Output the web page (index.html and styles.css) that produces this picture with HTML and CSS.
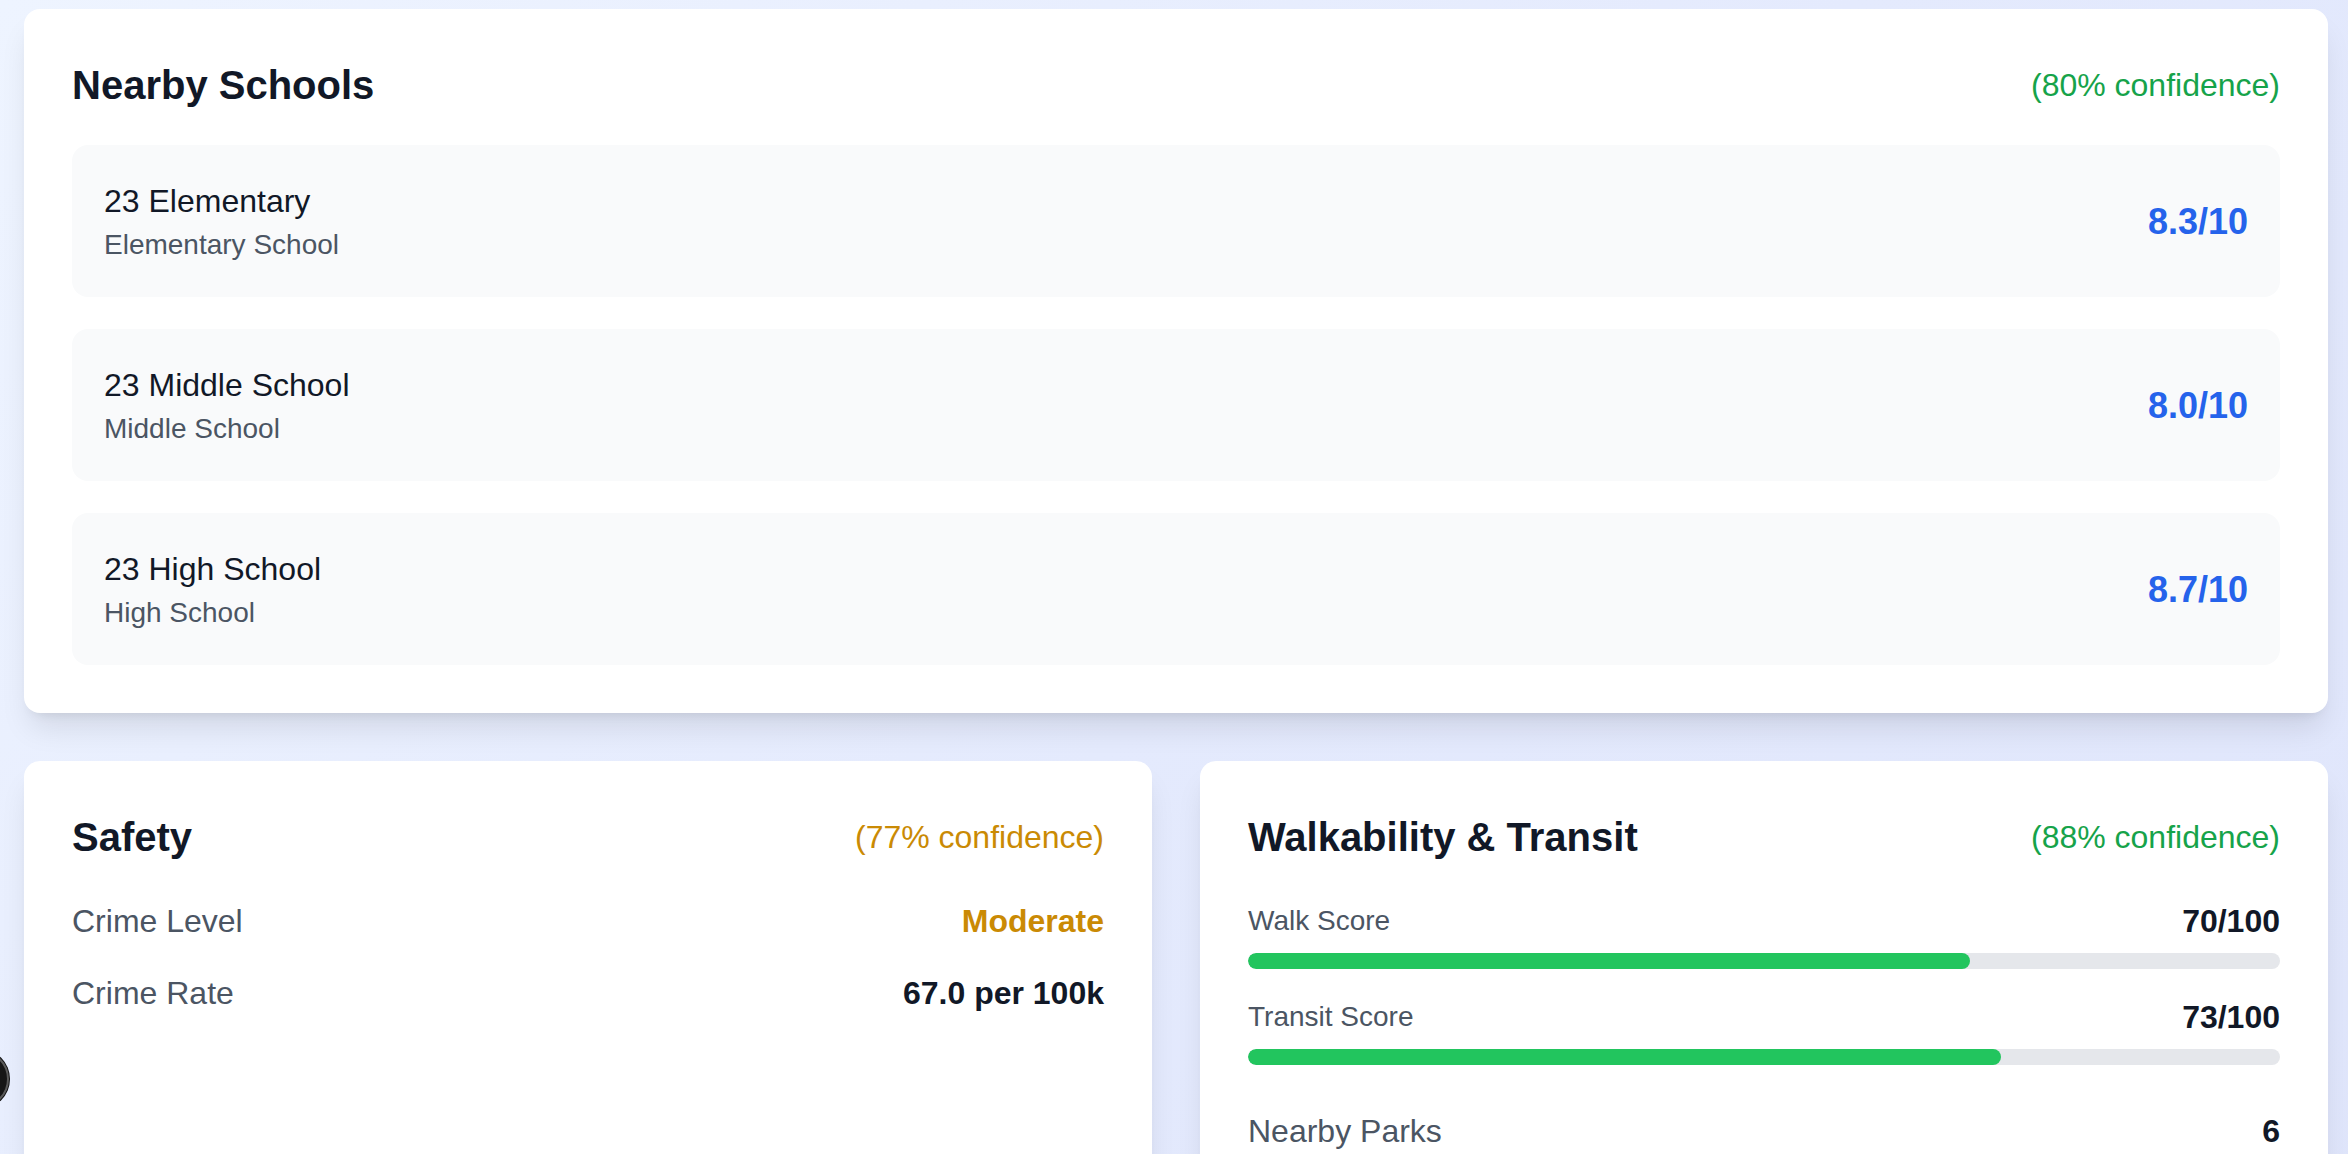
FILE: index.html
```html
<!DOCTYPE html>
<html lang="en">
<head>
<meta charset="utf-8">
<title>Neighborhood Report</title>
<link rel="stylesheet" href="styles.css">
</head>
<body>
<main class="page">
  <section class="card">
    <div class="card-head">
      <h2 class="card-title">Nearby Schools</h2>
      <span class="confidence conf-green">(80% confidence)</span>
    </div>
    <div class="school-list">
      <div class="school">
        <div class="school-info">
          <div class="school-name">23 Elementary</div>
          <div class="school-type">Elementary School</div>
        </div>
        <div class="school-score">8.3/10</div>
      </div>
      <div class="school">
        <div class="school-info">
          <div class="school-name">23 Middle School</div>
          <div class="school-type">Middle School</div>
        </div>
        <div class="school-score">8.0/10</div>
      </div>
      <div class="school">
        <div class="school-info">
          <div class="school-name">23 High School</div>
          <div class="school-type">High School</div>
        </div>
        <div class="school-score">8.7/10</div>
      </div>
    </div>
  </section>

  <div class="grid">
    <section class="card">
      <div class="card-head">
        <h2 class="card-title">Safety</h2>
        <span class="confidence conf-amber">(77% confidence)</span>
      </div>
      <div class="stat-list">
        <div class="stat">
          <span class="stat-label">Crime Level</span>
          <span class="stat-value val-amber">Moderate</span>
        </div>
        <div class="stat">
          <span class="stat-label">Crime Rate</span>
          <span class="stat-value">67.0 per 100k</span>
        </div>
      </div>
    </section>

    <section class="card">
      <div class="card-head">
        <h2 class="card-title">Walkability &amp; Transit</h2>
        <span class="confidence conf-green">(88% confidence)</span>
      </div>
      <div class="score-list">
        <div class="score">
          <div class="score-row">
            <span class="score-label">Walk Score</span>
            <span class="stat-value">70/100</span>
          </div>
          <div class="bar"><div class="bar-fill" style="width:70%"></div></div>
        </div>
        <div class="score">
          <div class="score-row">
            <span class="score-label">Transit Score</span>
            <span class="stat-value">73/100</span>
          </div>
          <div class="bar"><div class="bar-fill" style="width:73%"></div></div>
        </div>
      </div>
      <div class="stat-list extra">
        <div class="stat">
          <span class="stat-label">Nearby Parks</span>
          <span class="stat-value">6</span>
        </div>
      </div>
    </section>
  </div>
</main>
<div class="dev-badge"></div>
</body>
</html>
```

FILE: styles.css
```css
* { box-sizing: border-box; }

html, body {
  margin: 0;
  padding: 0;
}

body {
  font-family: "Liberation Sans", Arial, Helvetica, sans-serif;
  color: #111827;
  background: linear-gradient(135deg, #eef4ff 0%, #e4eafd 50%, #dfe5fb 100%);
  min-height: 1154px;
  overflow: hidden;
}

.page {
  padding: 9px 20px 0 24px;
  display: flex;
  flex-direction: column;
  gap: 48px;
}

.card {
  background: #ffffff;
  border-radius: 16px;
  padding: 48px;
  box-shadow: 0 20px 30px -6px rgba(0, 0, 0, 0.1), 0 8px 12px -8px rgba(0, 0, 0, 0.1);
}

.card-head {
  display: flex;
  justify-content: space-between;
  align-items: center;
  margin-bottom: 32px;
}

.card-title {
  margin: 0;
  font-size: 40px;
  line-height: 56px;
  font-weight: 700;
  color: #111827;
}

.confidence {
  font-size: 32px;
  line-height: 48px;
}

.conf-green { color: #16a34a; }
.conf-amber { color: #ca8a04; }

.school-list {
  display: flex;
  flex-direction: column;
  gap: 32px;
}

.school {
  background: #f9fafb;
  border-radius: 16px;
  padding: 32px;
  display: flex;
  justify-content: space-between;
  align-items: center;
}

.school-name {
  font-size: 32px;
  line-height: 48px;
  color: #111827;
}

.school-type {
  font-size: 28px;
  line-height: 40px;
  color: #4b5563;
}

.school-score {
  font-size: 36px;
  line-height: 56px;
  font-weight: 700;
  color: #2563eb;
  padding-top: 2px;
}

.grid {
  display: grid;
  grid-template-columns: 1fr 1fr;
  gap: 48px;
  min-height: 600px;
}

.stat-list {
  display: flex;
  flex-direction: column;
  gap: 24px;
}

.stat-list.extra {
  margin-top: 42px;
}

.stat {
  display: flex;
  justify-content: space-between;
  align-items: center;
}

.stat-label {
  font-size: 32px;
  line-height: 48px;
  color: #4b5563;
}

.stat-value {
  font-size: 32px;
  line-height: 48px;
  font-weight: 700;
  color: #111827;
}

.val-amber { color: #ca8a04; }

.score-list {
  display: flex;
  flex-direction: column;
  gap: 24px;
}

.score-row {
  display: flex;
  justify-content: space-between;
  align-items: center;
  margin-bottom: 8px;
}

.score-label {
  font-size: 28px;
  line-height: 40px;
  color: #4b5563;
}

.bar {
  height: 16px;
  background: #e5e7eb;
  border-radius: 9999px;
  overflow: hidden;
}

.bar-fill {
  height: 100%;
  background: #22c55e;
  border-radius: 9999px;
}

.dev-badge {
  position: fixed;
  left: -49px;
  top: 1050px;
  width: 58px;
  height: 58px;
  border-radius: 50%;
  background: #161616;
  border: 2px solid #5a5a5a;
  box-shadow: 0 0 0 1px #111;
}
```
